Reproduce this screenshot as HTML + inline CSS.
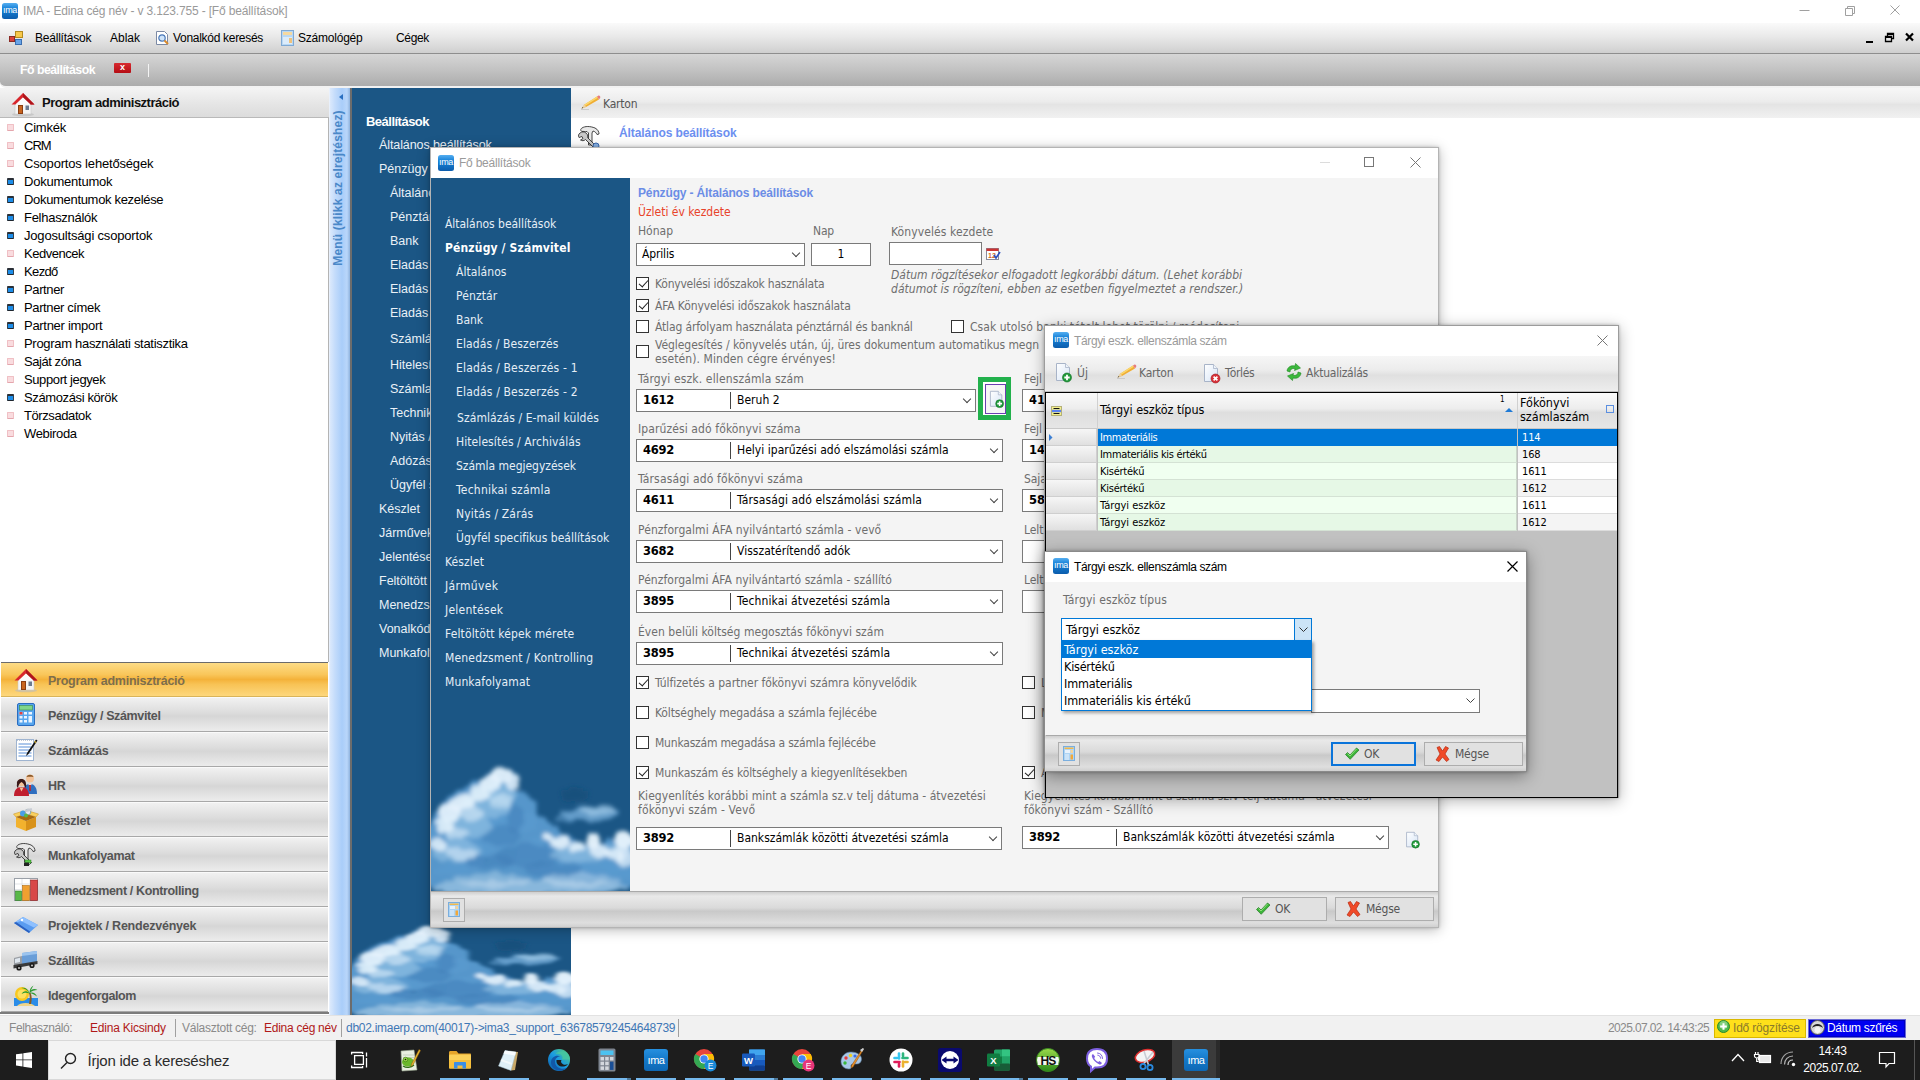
<!DOCTYPE html>
<html lang="hu"><head><meta charset="utf-8"><title>IMA</title>
<style>
*{box-sizing:border-box;margin:0;padding:0}
html,body{width:1920px;height:1080px;overflow:hidden;background:#fff}
body{position:relative;font-family:"DejaVu Sans Condensed","DejaVu Sans","Liberation Sans",sans-serif;font-size:12px;color:#000}
.a{position:absolute;white-space:nowrap}
.seg{font-family:"Liberation Sans",sans-serif}
.ar{font-family:"Liberation Sans",sans-serif}
.th{font-family:"DejaVu Sans Condensed","DejaVu Sans","Liberation Sans",sans-serif}
svg{position:absolute;overflow:visible}
/* top */
#titlebar{left:0;top:0;width:1920px;height:23px;background:#fff}
#menubar{left:0;top:23px;width:1920px;height:31px;background:linear-gradient(#fafafa 0%,#e9e9e9 45%,#cfcfcf 100%);border-bottom:1px solid #8e8e8e}
#tabbar{left:0;top:54px;width:1920px;height:33px;background:linear-gradient(#d6d6d6 0%,#c2c2c2 50%,#acacac 100%);border-bottom:1px solid #f0f0f0}
/* left */
#lefthead{left:0;top:87px;width:329px;height:31px;background:linear-gradient(#f4f4f4,#e4e4e4 60%,#dcdcdc);border-bottom:1px solid #b9b9b9}
#leftlist{left:0;top:118px;width:329px;height:544px;background:#fff;border-right:1px solid #9a9a9a}
.li{left:24px;font-family:"Liberation Sans",sans-serif;font-size:13px;letter-spacing:.1px;color:#000}
.bu{left:7px;width:8px;height:8px;border-radius:1.5px}
.bu.p{background:#f3c4c9;border:1px solid #e9a5ad;box-shadow:inset 0 0 0 1px #fbe6e8}
.bu.b{background:#2f7fc4;border:1px solid #1c4f82;box-shadow:inset 0 2px 0 #16324f}
.nav{left:1px;width:327px;height:35px;background:linear-gradient(#f1f1f1 0%,#dcdcdc 45%,#d6d6d6 55%,#ececec 100%);border-top:1px solid #fafafa;border-bottom:1px solid #a8a8a8}
.nav span{position:absolute;left:47px;top:10px;font-family:"Liberation Sans",sans-serif;font-weight:bold;font-size:12.5px;color:#555}

.li{font-size:12.5px;letter-spacing:-.05px}
#titlebar .tt{left:23px;top:4px;font-family:"Liberation Sans",sans-serif;font-size:12px;color:#9a9a9a;letter-spacing:-.15px}
.ima{width:16px;height:16px;border-radius:2.5px;background:linear-gradient(#2b9be8,#1173c7 55%,#0b5ea9);overflow:hidden}
.ima b{position:absolute;left:0;top:1px;width:16px;text-align:center;font:bold 8px/10px "Liberation Sans",sans-serif;color:#fff;letter-spacing:-.6px}
.mi{top:7px;font-family:"Liberation Sans",sans-serif;font-size:12.3px;color:#000;letter-spacing:-.1px}
#tabbar{border-bottom-left-radius:6px}
#tabbar .tn{left:20px;top:8px;font:bold 12.3px "Liberation Sans",sans-serif;color:#fff;letter-spacing:-.1px}
#tabbar .tx{left:114px;top:9px;width:17px;height:10px;background:linear-gradient(#d82a30,#b50d14);border-radius:1px;color:#fff;font:bold 9px/9px "Liberation Sans",sans-serif;text-align:center}
#tabbar .sp{left:148px;top:10px;width:1px;height:13px;background:#f4f4f4}
#lefthead span{position:absolute;left:42px;top:8px;font:bold 13px "Liberation Sans",sans-serif;color:#111;letter-spacing:-.15px}
#collapse{left:329px;top:87px;width:21px;height:928px;background:linear-gradient(90deg,#dbe9fc 0%,#c4dcfb 25%,#a9cdf9 60%,#b9d6fa 85%,#8fb3de 100%);border-left:1px solid #e8f0fc}
#collapse .vt{left:-70px;top:94px;width:160px;height:16px;transform:rotate(-90deg);font:bold 11.5px/16px "Liberation Sans",sans-serif;color:#4b88cb;text-align:center;letter-spacing:.1px}
#collapse .tri{left:8px;top:6px;width:0;height:0;border:4px solid transparent;border-right:5px solid #2a6fc0;border-left:0}
#bluepanel{left:350px;top:87px;width:221px;height:928px;background:#1b5685;border-left:1px solid #555;overflow:hidden}
#bluepanel div{position:absolute;white-space:nowrap;font-family:"Liberation Sans",sans-serif;font-size:12.5px;color:#eaf1f7}
#maintool{left:571px;top:87px;width:1349px;height:31px;background:linear-gradient(#f7f7f7 0%,#ececec 45%,#e4e4e4 55%,#f1f1f1 100%)}
#maintool span{position:absolute;left:32px;top:9px;font-size:12px;color:#555}
#mainttl{left:619px;top:125px;font:bold 12px "Liberation Sans",sans-serif;color:#6c8ff0}
.sel.nav{background:linear-gradient(#fddc86 0%,#f9c65a 35%,#f4b23a 50%,#f8c356 65%,#fdd77c 100%);border-top:1px solid #6b6b6b;border-bottom:1px solid #d9b45a}
.sel.nav span{color:#7d6e4c}
#navwrap{left:0;top:1012px;width:329px;height:3px;background:#e8e8e8;border-bottom:1px solid #8a8a8a}

.dlg{background:#f4f4f4;border:1px solid #b4b4b4;box-shadow:0 2px 12px rgba(0,0,0,.28),0 0 3px rgba(0,0,0,.2)}
.dt{left:0;top:0;right:0;height:30px;background:#fff}
.dt .ttl{left:28px;top:7px;font-family:"Liberation Sans",sans-serif;font-size:12px;color:#9a9a9a;letter-spacing:-.1px}
.bar{background:linear-gradient(#cfcfcf 0%,#e9e9e9 12%,#dadada 45%,#c9c9c9 55%,#dedede 88%,#d0d0d0 100%);border-top:1px solid #a9a9a9}
.btn{height:24px;border:1px solid #adadad;background:#e1e1e1;font-size:12px;color:#555}
.btn span{position:absolute;top:4px}
.lb{font-size:12px;color:#6e6e6e;letter-spacing:-.05px}
.cb{width:13px;height:13px;border:1px solid #333;background:#fff}
.cb.on:after{content:"";position:absolute;left:3.5px;top:0.5px;width:3.5px;height:7px;border:solid #222;border-width:0 1.4px 1.4px 0;transform:rotate(40deg)}
.cmb{height:24px;border:1px solid #7a7a7a;background:#fff;font-size:12px;color:#000}
.cmb b{position:absolute;left:6px;top:4px;font-family:"DejaVu Sans","Liberation Sans",sans-serif;font-size:11.5px;font-weight:bold;letter-spacing:.1px}
.cmb i{position:absolute;left:93px;top:3px;width:1px;height:17px;background:#444}
.cmb span{position:absolute;left:100px;top:4px}
.cmb:after{content:"";position:absolute;right:5px;top:7px;width:5px;height:5px;border:solid #444;border-width:0 1px 1px 0;transform:rotate(45deg)}
.cmb.na:after{display:none}
#d1menu{left:0;top:30px;width:199px;height:713px;background:#1b5685;overflow:hidden}
#d1menu div{position:absolute;white-space:nowrap;font-size:12px;color:#e6eef6}

#dlg2{left:1045px;top:325px;width:573px;height:472px;background:#c1c1c1;border:1px solid #9c9c9c;box-shadow:0 3px 14px rgba(0,0,0,.3),0 0 3px rgba(0,0,0,.25)}
#d2tool{left:0;top:30px;width:571px;height:35px;background:linear-gradient(#f6f6f6 0%,#ececec 40%,#e0e0e0 55%,#ededed 100%)}
#d2tool span{position:absolute;top:10px;font-size:12px;color:#666}
#grid{left:0;top:65px;width:571px;height:405px;border:1px solid #000;border-top:2px solid #000;background:#c1c1c1}
#ghead{left:0;top:0;width:569px;height:36px;background:linear-gradient(#fafafa 0%,#ededed 45%,#dedede 55%,#e6e6e6 100%);border-bottom:1px solid #c8c8c8}
.gh{font-size:12.5px;color:#000}
.gr{left:0;width:569px;height:17px;font-size:11.5px;letter-spacing:-.3px}
.gr u{position:absolute;left:0;top:0;width:50px;height:17px;background:linear-gradient(#f6f6f6,#e0e0e0);border-right:1px solid #cfcfcf;border-bottom:1px solid #cfcfcf}
.gr s{position:absolute;left:51px;top:0;width:420px;height:17px;background:#f0fff0;border-right:1px solid #c9d6c9;border-bottom:1px solid #d4e2d4;text-decoration:none;padding:2px 0 0 2px}
.gr em{position:absolute;left:472px;top:0;width:97px;height:17px;background:#fff;font-style:normal;border-bottom:1px solid #dcdcdc;padding:2px 0 0 3px}
.gr.alt s{background:#e6f8e6}
.gr.alt em{background:#f4f4f4}
.gr.sel s,.gr.sel em{background:#0078d7;color:#fff;border-color:#0078d7}
#dlg3{left:1045px;top:551px;width:483px;height:221px;background:#f4f4f4;border:1px solid #8a8a8a;box-shadow:0 4px 16px rgba(0,0,0,.4),0 0 3px rgba(0,0,0,.3)}
#dlg3 .ttl{color:#000}
#dd{left:15px;top:88px;width:251px;height:72px;background:#fff;border:1px solid #0078d7;box-shadow:2px 2px 3px rgba(0,0,0,.35);font-size:12.5px}
#dd div{position:absolute;left:0;width:249px;height:17px;padding:0 0 0 2px;line-height:16px;white-space:nowrap}
#status{left:0;top:1015px;width:1920px;height:25px;background:#f1f1f1;border-top:1px solid #e2e2e2;font-family:"Liberation Sans",sans-serif;font-size:12px}
#status div{position:absolute;top:5px;white-space:nowrap;letter-spacing:-.1px}
#status i{position:absolute;top:3px;width:1px;height:18px;background:#a0a0a0}
#task{left:0;top:1040px;width:1920px;height:40px;background:#1d1d1d}
#search{left:48px;top:0;width:288px;height:40px;background:#f3f3f3;border:1px solid #d8d8d8}
#search span{position:absolute;left:40px;top:11px;font-family:"Liberation Sans",sans-serif;font-size:15px;color:#2b2b2b;letter-spacing:-.1px}
.tk{position:absolute;top:0;width:48px;height:40px}
.tk.run:after{content:"";position:absolute;left:4px;right:4px;bottom:0;height:2px;background:#76b9ed}
.tk.act{background:#3b3b3b}
.tk.act:after{left:0;right:0}
.tki{position:absolute;left:12px;top:8px;width:24px;height:24px}
.nic{left:12px;top:4px}.hic{left:10px;top:3px}

/* fixes round 1 */
.lb,.li,#bluepanel div,#d1menu div,.dt .ttl,#mainttl{margin-top:1px}
#titlebar .tt{margin-top:0}
.nav span{top:11px;font-size:12.5px;letter-spacing:-.3px}
.mi{top:8px;font-size:12px;letter-spacing:-.2px}
#tabbar{height:34px;border-bottom:2px solid #f2f2f2}
#tabbar .tn{top:9px;letter-spacing:-.4px}
#lefthead{top:88px;height:30px}
#lefthead span{top:8px}
#collapse,#bluepanel{top:88px;height:927px}
#bluepanel div{margin-top:0}
#maintool{top:88px;height:30px}
#maintool span{top:9px}
#collapse .vt{font-size:12px;letter-spacing:.3px;color:#4a88c8;top:92px}
.cmb span,.cmb b{margin-top:0}
.btn span{margin-top:0}
.dt .ttl{letter-spacing:-.25px}
.gr{font-size:11px;letter-spacing:-.15px}
.gr s,.gr em{padding-top:1px}

/* fixes round 2 */
.ima{background:linear-gradient(#55aef0 0%,#2088dc 30%,#1478cc 55%,#0c5cac 100%)}
.ima b{left:-1px;top:0;width:18px;font:normal 11px/16px "Liberation Sans",sans-serif;letter-spacing:-.8px}
#lefthead span{top:7px}
.tk{margin-left:1px}
#dlg2{height:473px}
#grid{height:406px}

/* fixes round 3 */
.ima b{left:-1px;top:0;width:18px;font:normal 10px/15px "Liberation Sans",sans-serif;letter-spacing:-.6px}
#dlg3 .lb{margin-top:0}
#dd{height:71px}
#dd div{line-height:18px}

.gr s,.gr em{padding-top:2px}
.cb.on:after{left:3.5px;top:0;width:4px;height:8px;border-width:0 1.3px 1.3px 0;transform:rotate(42deg)}

/* 1px dialog shift */
#dlg2{left:1044px;width:575px}
#dlg3{left:1044px;width:484px}
.wr{left:1px;top:0;height:100%}
#dlg2 .wr{width:571px}
#dlg3 .wr{width:481px}
.wr .dt{left:-1px;right:-1px;border-left:1px solid transparent}
#d2tool{left:-1px;width:573px;border-left:1px solid transparent}
#grid{left:-1px;width:573px}
.gw{left:1px;top:0;width:569px;height:100%}
#ghead{left:-1px;width:571px;border-left:1px solid transparent}
.gr u{left:-1px;width:51px}
#dlg3 .bar{left:-1px!important;width:482px!important;border-left:1px solid transparent}
.ima b{font:normal 9px/15px "Liberation Sans",sans-serif;letter-spacing:-.35px;left:-1px;width:18px}

#dlg3{width:483px}
#dlg3 .wr{width:480px}
#dlg3 .bar{width:481px!important}
#ghead .gh{margin-top:-1px}

.bu{left:7px;width:7px;height:7px;border-radius:1px}
.bu.p{background:#fae1e3;border:1px solid #f2c6ca;border-bottom-color:#e7adb3;box-shadow:none}
.bu.b{background:#1c8de9;border:1px solid #33424f;border-top:2px solid #2a2f36;border-bottom-color:#20262e;box-shadow:none}

.li{font-size:13px;margin-top:1px}
.bu.p{background:#f9dcdf;border-color:#f0c0c5;border-bottom-color:#e4a6ad}
#bluepanel div{margin-top:1px}

#navwrap{top:1012px;height:2px;background:#7c7c7c;border:none;left:0;width:329px}
#search span{left:38.5px}
#dlg3 .dt{right:0}

#dlg1 .cmb b,#dlg1 .cmb span{top:3px}
#dlg1 .cmb i{top:2px}
#dlg1 .cmb:after{top:6px}
body{font-stretch:condensed}
.cmb b{font-stretch:normal}

#collapse .vt{left:-72px;letter-spacing:.18px}
#collapse .tri{left:9px;top:6px;border:3.5px solid transparent;border-right:4.5px solid #2a6fc0;border-left:0}
#leftlist{border-right-color:#b4b4b4}
#bluepanel{border-left:2px solid #6c6c6c}
#bluepanel div{margin-left:-1px}

#grid{top:66px;border-top:1px solid #000;height:406px}
.gr s{width:419px}
.gr em{left:471px;width:99px;padding-left:4px}
</style></head><body>
<div class="a" id="titlebar"><div class="a ima" style="left:2px;top:3px"><b>ıma</b></div><div class="a tt" style="letter-spacing:-0.16px/*f*/;letter-spacing:-0.16px/*f*/">IMA - Edina cég név - v 3.123.755 - [Fő beállítások]</div>
<svg style="left:1790px;top:0" width="130" height="23" viewBox="0 0 130 23" fill="none" stroke="#a0a0a0" stroke-width="1"><path d="M9.5 10.5h10"/><path d="M55.5 8.5h7v7h-7zM57.5 8.5v-2h7v7h-2"/><path d="M100.500 5.500l9 9M109.500 5.500l-9 9"/></svg></div>
<div class="a" id="menubar">
<svg style="left:9px;top:8px" width="14" height="14" viewBox="0 0 14 14"><rect x="0.500" y="5.500" width="5" height="5" fill="#d9413a" stroke="#8a2a24"/><rect x="6.500" y="0.500" width="7" height="6" fill="#f7c84a" stroke="#b48a1e"/><rect x="6.500" y="8.500" width="6" height="5" fill="#6aa5e8" stroke="#3a6eb0"/></svg>
<div class="a mi" style="left:35px;letter-spacing:-0.223px/*f*/">Beállítások</div><div class="a mi" style="left:110px;letter-spacing:-0.006px/*f*/">Ablak</div>
<svg style="left:155px;top:7px" width="15" height="16" viewBox="0 0 15 16"><path d="M1.500 1.500h8l3 3v10h-11z" fill="#fff" stroke="#7c8aa5"/><circle cx="7" cy="8" r="3.200" fill="#cfe4fa" stroke="#4a78b8" stroke-width="1.200"/><path d="M9.500 10.500l3.500 3.500" stroke="#d98a2b" stroke-width="2"/></svg>
<div class="a mi" style="left:173px;letter-spacing:-0.296px/*f*/">Vonalkód keresés</div>
<svg style="left:281px;top:7px" width="13" height="16" viewBox="0 0 13 16"><rect x="0.500" y="0.500" width="12" height="15" fill="#b9d8f4" stroke="#7fa9d4"/><rect x="2" y="2" width="9" height="3" fill="#f6d9a0"/><rect x="2" y="7" width="9" height="7" fill="#dcecfb"/><rect x="8" y="8" width="3" height="5" fill="#f0c27a"/></svg>
<div class="a mi" style="left:298px;letter-spacing:-0.222px/*f*/">Számológép</div><div class="a mi" style="left:396px;letter-spacing:-0.341px/*f*/">Cégek</div>
<svg style="left:1860px;top:5px" width="60" height="20" viewBox="0 0 60 20" fill="none" stroke="#000"><path d="M6 14h7" stroke-width="2"/><path d="M25.500 8.500h6v5h-6zM27.500 8v-2.500h6v5h-2" stroke-width="1.300"/><path d="M25 9h7M27 6h7" stroke-width="1.800"/><path d="M46 5.500l7 7M53 5.500l-7 7" stroke-width="2.200"/></svg>
</div>
<div class="a" id="tabbar"><div class="a tn" style="letter-spacing:-0.5px/*f*/;letter-spacing:-0.501px/*f*/">Fő beállítások</div><div class="a tx">x</div><div class="a sp"></div></div>
<div class="a" id="lefthead"><!--nh--><svg class="hic" width="26" height="26" viewBox="0 0 26 26"><ellipse cx="13" cy="23.500" rx="11" ry="1.800" fill="#bbb" opacity=".6"/><rect x="5" y="12" width="16" height="11" fill="#f4f4f4" stroke="#c8c8c8" stroke-width=".6"/><path d="M13 2L1.500 13.500h4L13 6.500l7.500 7h4z" fill="#d8262c"/><path d="M13 2l11.500 11.500h-4L13 6.500z" fill="#b0151b"/><path d="M13 6.500L5.500 13.500h15z" fill="#fafafa"/><rect x="8" y="14" width="5" height="9" fill="#8a3d12"/><rect x="9" y="15" width="3" height="7" fill="#c8641e"/><rect x="15.500" y="14.500" width="3.500" height="4.500" fill="#6b7a90"/></svg><!--/nh--><span style="letter-spacing:-0.505px/*f*/;letter-spacing:-0.505px/*f*/">Program adminisztráció</span></div>
<div class="a" id="leftlist"></div>
<!--LEFT-->
<div class="a bu p" style="top:124px"></div><div class="a li" style="top:119px;letter-spacing:-0.224px/*f*/">Cimkék</div>
<div class="a bu p" style="top:142px"></div><div class="a li" style="top:137px;letter-spacing:-0.973px/*f*/">CRM</div>
<div class="a bu p" style="top:160px"></div><div class="a li" style="top:155px;letter-spacing:-0.175px/*f*/">Csoportos lehetőségek</div>
<div class="a bu b" style="top:178px"></div><div class="a li" style="top:173px;letter-spacing:-0.229px/*f*/">Dokumentumok</div>
<div class="a bu b" style="top:196px"></div><div class="a li" style="top:191px;letter-spacing:-0.318px/*f*/">Dokumentumok kezelése</div>
<div class="a bu b" style="top:214px"></div><div class="a li" style="top:209px;letter-spacing:-0.275px/*f*/">Felhasználók</div>
<div class="a bu b" style="top:232px"></div><div class="a li" style="top:227px;letter-spacing:-0.18px/*f*/">Jogosultsági csoportok</div>
<div class="a bu p" style="top:250px"></div><div class="a li" style="top:245px;letter-spacing:-0.481px/*f*/">Kedvencek</div>
<div class="a bu b" style="top:268px"></div><div class="a li" style="top:263px;letter-spacing:-0.635px/*f*/">Kezdő</div>
<div class="a bu b" style="top:286px"></div><div class="a li" style="top:281px;letter-spacing:-0.376px/*f*/">Partner</div>
<div class="a bu b" style="top:304px"></div><div class="a li" style="top:299px;letter-spacing:-0.378px/*f*/">Partner címek</div>
<div class="a bu b" style="top:322px"></div><div class="a li" style="top:317px;letter-spacing:-0.291px/*f*/">Partner import</div>
<div class="a bu p" style="top:340px"></div><div class="a li" style="top:335px;letter-spacing:-0.3px/*f*/">Program használati statisztika</div>
<div class="a bu p" style="top:358px"></div><div class="a li" style="top:353px;letter-spacing:-0.444px/*f*/">Saját zóna</div>
<div class="a bu p" style="top:376px"></div><div class="a li" style="top:371px;letter-spacing:-0.388px/*f*/">Support jegyek</div>
<div class="a bu b" style="top:394px"></div><div class="a li" style="top:389px;letter-spacing:-0.379px/*f*/">Számozási körök</div>
<div class="a bu p" style="top:412px"></div><div class="a li" style="top:407px;letter-spacing:-0.412px/*f*/">Törzsadatok</div>
<div class="a bu p" style="top:430px"></div><div class="a li" style="top:425px;letter-spacing:-0.339px/*f*/">Webiroda</div>
<!--NAV-->
<div class="a nav sel" style="top:662px"><!--n0--><svg class="nic" width="26" height="26" viewBox="0 0 26 26"><ellipse cx="13" cy="23.500" rx="11" ry="1.800" fill="#bbb" opacity=".6"/><rect x="5" y="12" width="16" height="11" fill="#f4f4f4" stroke="#c8c8c8" stroke-width=".6"/><path d="M13 2L1.500 13.500h4L13 6.500l7.500 7h4z" fill="#d8262c"/><path d="M13 2l11.500 11.500h-4L13 6.500z" fill="#b0151b"/><path d="M13 6.500L5.500 13.500h15z" fill="#fafafa"/><rect x="8" y="14" width="5" height="9" fill="#8a3d12"/><rect x="9" y="15" width="3" height="7" fill="#c8641e"/><rect x="15.500" y="14.500" width="3.500" height="4.500" fill="#6b7a90"/></svg><!--/n0--><span style="letter-spacing:-0.26px/*f*/;letter-spacing:-0.259px/*f*/">Program adminisztráció</span></div>
<div class="a nav" style="top:697px"><!--n1--><svg class="nic" width="26" height="26" viewBox="0 0 26 26"><rect x="4.500" y="1.500" width="17" height="22" rx="1.500" fill="#58a6ee" stroke="#2a6cc0"/><rect x="6.500" y="3.500" width="13" height="4.500" fill="#7fd68a" stroke="#3a8a4a" stroke-width=".6"/><g fill="#eaf4ff"><rect x="6.500" y="10" width="3" height="2.500"/><rect x="11" y="10" width="3" height="2.500"/><rect x="15.500" y="10" width="3.500" height="2.500"/><rect x="6.500" y="14" width="3" height="2.500"/><rect x="11" y="14" width="3" height="2.500"/><rect x="6.500" y="18" width="3" height="2.500"/><rect x="11" y="18" width="3" height="2.500"/><rect x="15.500" y="14" width="3.500" height="6.500"/></g><rect x="6.500" y="10" width="3" height="2.500" fill="#e04040"/></svg><!--/n1--><span style="letter-spacing:-0.368px/*f*/;letter-spacing:-0.368px/*f*/">Pénzügy / Számvitel</span></div>
<div class="a nav" style="top:732px"><!--n2--><svg class="nic" width="26" height="26" viewBox="0 0 26 26"><rect x="3.500" y="2.500" width="17" height="21" fill="#fff" stroke="#9fb4d0"/><path d="M5.500 7h13M5.500 10h13M5.500 13h13M5.500 16h13M5.500 19h13" stroke="#5a8fd8" stroke-width="1.200"/><path d="M4 3.500h16" stroke="#c0c8d4" stroke-dasharray="1 1"/><path d="M23 2.500L14 16l-1 3 2.500-2L24.500 3.500z" fill="#111"/><path d="M21.500 4.500l1.500 1" stroke="#e8c030" stroke-width="1.500"/></svg><!--/n2--><span style="letter-spacing:-0.327px/*f*/;letter-spacing:-0.327px/*f*/">Számlázás</span></div>
<div class="a nav" style="top:767px"><!--n3--><svg class="nic" width="26" height="26" viewBox="0 0 26 26"><circle cx="17" cy="6.500" r="4" fill="#f2c39a"/><path d="M13.500 5c1-3 6-3 7 0-2-.5-5-.5-7 0z" fill="#8a5a2a"/><path d="M10 22c0-7 3-10 7-10s7 3 7 10z" fill="#2f6fc0"/><path d="M15.500 12l1.500 5 1.500-5z" fill="#fff"/><path d="M16.600 13l.4 6 .4-6z" fill="#c02020" stroke="#c02020"/><circle cx="8.500" cy="10.500" r="3.800" fill="#f2c39a"/><path d="M4 12c-1-6 9-7 9 0 .5 2 0 3-1 4-.5-3-1.500-5-3.500-6-2 1-3 3-3.500 6-1-1-1.500-2-1-4z" fill="#3a1a1a"/><path d="M1 24c0-6 3-9 7.500-9S16 18 16 24z" fill="#c01e2e"/><path d="M6.500 15.500l2 4 2-4z" fill="#f2c39a"/></svg><!--/n3--><span style="letter-spacing:-0.384px/*f*/;letter-spacing:-0.382px/*f*/">HR</span></div>
<div class="a nav" style="top:802px"><!--n4--><svg class="nic" width="26" height="26" viewBox="0 0 26 26"><path d="M3 10l10 4v10L3 20z" fill="#f2b22e"/><path d="M23 10l-10 4v10l10-4z" fill="#d8921a"/><path d="M3 10l-2.500-3 10-3L13 7zM23 10l2.500-3-10-3L13 7z" fill="#f8d060" stroke="#c8901a" stroke-width=".5"/><path d="M3 10l10-3 10 3-10 4z" fill="#a86a10"/><circle cx="10" cy="6.500" r="3" fill="#4a9ee8"/><circle cx="15" cy="5" r="2.800" fill="#e8e8f0" stroke="#8aa"/><rect x="12" y="2" width="7" height="2.500" fill="#c8ccd4" transform="rotate(-15 15 3)"/><circle cx="13" cy="8.500" r="2" fill="#58b848"/></svg><!--/n4--><span style="letter-spacing:-0.21px/*f*/;letter-spacing:-0.212px/*f*/">Készlet</span></div>
<div class="a nav" style="top:837px"><!--n5--><svg class="nic" width="26" height="26" viewBox="0 0 26 26"><path d="M5 3c3-2 8-2 13 0 3 1.500 4 4 4 6l-2 .5c-1-2-2-3-4-3.500L15 8v12h-3.500V8l-1.500-1.500C7.500 7 6.500 6 5 6.500 3 5.500 3.500 4 5 3z" fill="#e8e8e8" stroke="#333" stroke-width=".9"/><path d="M3 8c-1.500 1-2 3-1 4.500l3-1 1 2-2.500 1.500c1.500 1 3.500 1 5-.5l8 8 2-2-8-8c.5-2 0-3.500-1.500-4.500-2-1.500-4-1.500-6 0z" fill="#c8c8c8" stroke="#222" stroke-width=".8"/><rect x="12" y="18" width="6" height="3" fill="#58c848" stroke="#2a7a20" stroke-width=".5"/><rect x="11" y="20.500" width="5" height="3.500" fill="#222"/></svg><!--/n5--><span style="letter-spacing:-0.33px/*f*/;letter-spacing:-0.33px/*f*/">Munkafolyamat</span></div>
<div class="a nav" style="top:872px"><!--n6--><svg class="nic" width="26" height="26" viewBox="0 0 26 26"><rect x="1.500" y="1.500" width="23" height="22" fill="#fff" stroke="#9aa0a8"/><path d="M2 7h22M2 12.500h22M2 18h22M9 2v21M17 2v21" stroke="#d4d8dc" stroke-width=".7"/><rect x="2.500" y="14" width="6" height="9.500" fill="#58b848" stroke="#2a7a20" stroke-width=".6"/><rect x="9.500" y="8.500" width="7" height="15" fill="#f0a030" stroke="#b06a10" stroke-width=".6"/><rect x="17.500" y="3" width="7" height="20.500" fill="#d84848" stroke="#902020" stroke-width=".6"/></svg><!--/n6--><span style="letter-spacing:-0.361px/*f*/;letter-spacing:-0.361px/*f*/">Menedzsment / Kontrolling</span></div>
<div class="a nav" style="top:907px"><!--n7--><svg class="nic" width="26" height="26" viewBox="0 0 26 26"><path d="M1 11l9-6 15 8-9 8z" fill="#5a9cf0"/><path d="M1 11l9-6 15 8-4 2.500L8 9z" fill="#8ec0ff"/><path d="M1 11l15 10 1-1.500L3 10z" fill="#2a60c0"/><circle cx="9" cy="8" r="1.200" fill="#fff"/></svg><!--/n7--><span style="letter-spacing:-0.219px/*f*/;letter-spacing:-0.219px/*f*/">Projektek / Rendezvények</span></div>
<div class="a nav" style="top:942px"><!--n8--><svg class="nic" width="26" height="26" viewBox="0 0 26 26"><path d="M9 6l15-2v12l-15 3z" fill="#6a9ed8"/><path d="M9 6l15-2v3L9 9z" fill="#9cc4ee"/><path d="M1 11l8-2v10l-8 1.500z" fill="#9a9ea4"/><path d="M2 12l5-1.200V15L2 16z" fill="#dfe7ef"/><path d="M0.500 18l24-4v3l-24 4.500z" fill="#3a3a3a"/><circle cx="6" cy="21" r="2.600" fill="#1a1a1a"/><circle cx="6" cy="21" r="1.100" fill="#bbb"/><circle cx="19" cy="18.500" r="2.600" fill="#1a1a1a"/><circle cx="19" cy="18.500" r="1.100" fill="#bbb"/></svg><!--/n8--><span style="letter-spacing:-0.414px/*f*/;letter-spacing:-0.415px/*f*/">Szállítás</span></div>
<div class="a nav" style="top:977px"><!--n9--><svg class="nic" width="26" height="26" viewBox="0 0 26 26"><rect x="1" y="16" width="24" height="8" fill="#2a8ce8"/><circle cx="9" cy="12" r="7" fill="#f8c820"/><circle cx="9" cy="12" r="4.500" fill="#fce060"/><path d="M4 24c3-4 14-4 18 0z" fill="#f0d488"/><path d="M16 22c1-5 1-8 0-11l1.500-.5c1.500 3.500 1.500 7 .5 11.500z" fill="#8a5a20"/><path d="M16.500 11C13 8 10 9 8.500 12c3-1.500 5-1.500 8-.5zM16.500 11c-1-4-5-6-8-5 3 .5 6 2 8 5zM16.500 11c1-4 5-5 8-3-3 0-6 1-8 3zM16.500 11c3-1.500 6 0 7.500 3.500-2.500-2-4.500-3-7.500-3.500zM16.500 11c0-3 1-6 4-7.500-1.500 2-2.500 5-4 7.500z" fill="#2a9a30"/></svg><!--/n9--><span style="letter-spacing:-0.412px/*f*/;letter-spacing:-0.412px/*f*/">Idegenforgalom</span></div>
<!--/NAV-->
<div class="a" id="collapse"><div class="a tri"></div><div class="a vt">Menü (klikk az elrejtéshez)</div></div>
<div class="a" id="bluepanel"><div style="left:15px;top:25px;font-weight:bold;font-size:13px;color:#fff;letter-spacing:-0.514px/*f*/">Beállítások</div><div style="left:28px;top:49px;letter-spacing:-0.091px/*f*/">Általános beállítások</div><div style="left:28px;top:73px">Pénzügy / Számvitel</div><div style="left:39px;top:97px">Általános</div><div style="left:39px;top:121px">Pénztár</div><div style="left:39px;top:145px">Bank</div><div style="left:39px;top:169px">Eladás / Beszerzés</div><div style="left:39px;top:193px">Eladás / Beszerzés - 1</div><div style="left:39px;top:217px">Eladás / Beszerzés - 2</div><div style="left:39px;top:243px">Számlázás / E-mail küldés</div><div style="left:39px;top:269px">Hitelesítés / Archiválás</div><div style="left:39px;top:293px">Számla megjegyzések</div><div style="left:39px;top:317px">Technikai számla</div><div style="left:39px;top:341px">Nyitás / Zárás</div><div style="left:39px;top:365px">Adózás</div><div style="left:39px;top:389px">Ügyfél specifikus beállítások</div><div style="left:28px;top:413px">Készlet</div><div style="left:28px;top:437px">Járművek</div><div style="left:28px;top:461px">Jelentések</div><div style="left:28px;top:485px">Feltöltött képek mérete</div><div style="left:28px;top:509px">Menedzsment / Kontrolling</div><div style="left:28px;top:533px">Vonalkód</div><div style="left:28px;top:557px">Munkafolyamat</div><!--CLOUD1--><svg style="left:0;top:837px;width:220px;height:90px" viewBox="0 0 200 130" preserveAspectRatio="none"><defs><filter id="cf1" x="-10%" y="-10%" width="120%" height="120%"><feTurbulence type="fractalNoise" baseFrequency=".07" numOctaves="4" seed="4" result="n"/><feDisplacementMap in="SourceGraphic" in2="n" scale="10" xChannelSelector="R" yChannelSelector="G" result="d"/><feGaussianBlur in="d" stdDeviation="2.200"/></filter></defs><g filter="url(#cf1)"><ellipse cx="70" cy="18" rx="17" ry="14" fill="#5a9acf" opacity="0.95"/><ellipse cx="58" cy="30" rx="26" ry="18" fill="#5a9acf" opacity="0.95"/><ellipse cx="45" cy="45" rx="36" ry="22" fill="#5a9acf" opacity="0.95"/><ellipse cx="72" cy="50" rx="36" ry="28" fill="#5a9acf" opacity="0.95"/><ellipse cx="40" cy="70" rx="44" ry="26" fill="#5a9acf" opacity="0.95"/><ellipse cx="88" cy="75" rx="42" ry="28" fill="#5a9acf" opacity="0.95"/><ellipse cx="20" cy="90" rx="34" ry="24" fill="#5a9acf" opacity="0.95"/><ellipse cx="122" cy="92" rx="36" ry="20" fill="#5a9acf" opacity="0.95"/><ellipse cx="160" cy="98" rx="38" ry="18" fill="#5a9acf" opacity="0.95"/><ellipse cx="192" cy="95" rx="22" ry="22" fill="#5a9acf" opacity="0.95"/><ellipse cx="100" cy="116" rx="112" ry="22" fill="#5a9acf" opacity="0.95"/><ellipse cx="28" cy="58" rx="28" ry="20" fill="#5a9acf" opacity="0.95"/><ellipse cx="98" cy="94" rx="32" ry="12" fill="#3d7cb6" opacity="0.5"/><ellipse cx="72" cy="72" rx="20" ry="10" fill="#3d7cb6" opacity="0.5"/><ellipse cx="122" cy="108" rx="28" ry="8" fill="#3d7cb6" opacity="0.5"/><ellipse cx="60" cy="100" rx="24" ry="8" fill="#3d7cb6" opacity="0.5"/><ellipse cx="85" cy="55" rx="10" ry="14" fill="#3d7cb6" opacity="0.5"/><ellipse cx="55" cy="40" rx="24" ry="14" fill="#a4cdec" opacity="0.5"/><ellipse cx="35" cy="62" rx="26" ry="14" fill="#a4cdec" opacity="0.5"/><ellipse cx="25" cy="88" rx="24" ry="12" fill="#a4cdec" opacity="0.5"/><ellipse cx="70" cy="28" rx="16" ry="12" fill="#a4cdec" opacity="0.5"/><ellipse cx="150" cy="92" rx="30" ry="8" fill="#a4cdec" opacity="0.5"/><ellipse cx="185" cy="90" rx="14" ry="10" fill="#a4cdec" opacity="0.5"/><ellipse cx="70" cy="10" rx="11" ry="8" fill="#e8f4fd" opacity="0.9"/><ellipse cx="60" cy="18" rx="10" ry="8" fill="#e8f4fd" opacity="0.9"/><ellipse cx="82" cy="17" rx="8" ry="7" fill="#e8f4fd" opacity="0.8"/><ellipse cx="48" cy="28" rx="10" ry="8" fill="#e8f4fd" opacity="0.85"/><ellipse cx="30" cy="38" rx="14" ry="9" fill="#e8f4fd" opacity="0.9"/><ellipse cx="18" cy="48" rx="12" ry="9" fill="#e8f4fd" opacity="0.9"/><ellipse cx="40" cy="50" rx="14" ry="8" fill="#e8f4fd" opacity="0.5"/><ellipse cx="12" cy="62" rx="10" ry="8" fill="#e8f4fd" opacity="0.85"/><ellipse cx="26" cy="70" rx="12" ry="7" fill="#e8f4fd" opacity="0.5"/><ellipse cx="8" cy="82" rx="9" ry="8" fill="#e8f4fd" opacity="0.8"/><ellipse cx="30" cy="92" rx="16" ry="7" fill="#e8f4fd" opacity="0.5"/><ellipse cx="118" cy="74" rx="7" ry="5" fill="#e8f4fd" opacity="0.9"/><ellipse cx="130" cy="80" rx="9" ry="6" fill="#e8f4fd" opacity="0.9"/><ellipse cx="147" cy="84" rx="8" ry="6" fill="#e8f4fd" opacity="0.85"/><ellipse cx="163" cy="77" rx="7" ry="9" fill="#e8f4fd" opacity="0.95"/><ellipse cx="170" cy="88" rx="10" ry="7" fill="#e8f4fd" opacity="0.8"/><ellipse cx="193" cy="77" rx="9" ry="10" fill="#e8f4fd" opacity="0.95"/><ellipse cx="184" cy="92" rx="10" ry="7" fill="#e8f4fd" opacity="0.8"/><ellipse cx="197" cy="95" rx="8" ry="10" fill="#e8f4fd" opacity="0.7"/><ellipse cx="60" cy="119" rx="40" ry="7" fill="#e8f4fd" opacity="0.3"/><ellipse cx="150" cy="119" rx="40" ry="7" fill="#e8f4fd" opacity="0.32"/><ellipse cx="100" cy="126" rx="100" ry="7" fill="#e8f4fd" opacity="0.35"/><ellipse cx="70" cy="36" rx="12" ry="8" fill="#e8f4fd" opacity="0.4"/><ellipse cx="160" cy="50" rx="30" ry="7" fill="#7fb6e2" opacity="0.7"/><ellipse cx="168" cy="46" rx="18" ry="5" fill="#a8d0ee" opacity="0.6"/><ellipse cx="140" cy="55" rx="16" ry="4" fill="#6ea8d8" opacity="0.5"/><ellipse cx="145" cy="30" rx="14" ry="8" fill="#164a75" opacity="0.55"/></g></svg><!--/CLOUD1--></div>
<div class="a" id="maintool"><svg style="left:10px;top:7px" width="20" height="15" viewBox="0 0 20 15"><path d="M0.500 13.500l3-4L16 1.500l2 3L5 12z" fill="#f0ae34"/><path d="M3.500 9.500L16 1.500l.9 1.300L4.300 10.800z" fill="#fbd76c"/><path d="M16 1.500l1.600-.9c.9-.4 2.200 1.400 1.600 2.200L18 4.500z" fill="#e77c7c"/><path d="M0.500 13.500l3-4L5 12z" fill="#ead2a4"/><path d="M0.500 13.500l1.200-1.600.6 1z" fill="#444"/><path d="M0 14.500h8" stroke="#c4c4c4" stroke-width=".8"/></svg><span style="letter-spacing:-0.202px/*f*/;letter-spacing:-0.2px/*f*/">Karton</span></div>
<svg style="left:577px;top:125px" width="26" height="26" viewBox="0 0 26 26"><path d="M5 3c3-2 8-2 13 0 3 1.500 4 4 4 6l-2 .5c-1-2-2-3-4-3.500L15 8v12h-3.500V8l-1.500-1.500C7.500 7 6.500 6 5 6.500 3 5.500 3.500 4 5 3z" fill="#e8e8e8" stroke="#333" stroke-width=".9"/><path d="M3 8c-1.500 1-2 3-1 4.500l3-1 1 2-2.500 1.500c1.500 1 3.500 1 5-.5l8 8 2-2-8-8c.5-2 0-3.500-1.500-4.500-2-1.500-4-1.500-6 0z" fill="#c8c8c8" stroke="#222" stroke-width=".8"/><circle cx="19" cy="21" r="3" fill="#8ab4e8" stroke="#3a6ab0"/></svg><div class="a" id="mainttl" style="letter-spacing:-0.089px/*f*/">Általános beállítások</div>
<div class="a" id="navwrap"></div>
<div class="a dlg" id="dlg1" style="left:430px;top:147px;width:1009px;height:781px"><div class="a dt"><div class="a ima" style="left:7px;top:7px"><b>ıma</b></div><div class="a ttl" style="letter-spacing:-0.23px/*f*/;letter-spacing:-0.23px/*f*/">Fő beállítások</div><svg style="left:880px;top:0" width="126" height="30" viewBox="0 0 126 30" fill="none"><path d="M9 14.500h10" stroke="#dcdcdc"/><rect x="53.500" y="9.500" width="9" height="9" stroke="#777"/><path d="M99.500 9.500l10 10M109.500 9.500l-10 10" stroke="#777"/></svg></div>
<div class="a" id="d1menu"><div style="left:14px;top:38px;letter-spacing:-0.026px/*f*/">Általános beállítások</div><div style="left:14px;top:62px;font-weight:bold;font-size:12px;color:#fff;letter-spacing:.1px;letter-spacing:0.151px/*f*/">Pénzügy / Számvitel</div><div style="left:25px;top:86px;letter-spacing:0.064px/*f*/">Általános</div><div style="left:25px;top:110px;letter-spacing:0.103px/*f*/">Pénztár</div><div style="left:25px;top:134px;letter-spacing:-0.031px/*f*/">Bank</div><div style="left:25px;top:158px;letter-spacing:0.117px/*f*/">Eladás / Beszerzés</div><div style="left:25px;top:182px;letter-spacing:0.167px/*f*/">Eladás / Beszerzés - 1</div><div style="left:25px;top:206px;letter-spacing:0.167px/*f*/">Eladás / Beszerzés - 2</div><div style="left:26px;top:232px;letter-spacing:0.087px/*f*/">Számlázás / E-mail küldés</div><div style="left:25px;top:256px;letter-spacing:0.077px/*f*/">Hitelesítés / Archiválás</div><div style="left:25px;top:280px;letter-spacing:-0.023px/*f*/">Számla megjegyzések</div><div style="left:25px;top:304px;letter-spacing:0.234px/*f*/">Technikai számla</div><div style="left:25px;top:328px;letter-spacing:0.155px/*f*/">Nyitás / Zárás</div><div style="left:25px;top:352px;letter-spacing:0.007px/*f*/">Ügyfél specifikus beállítások</div><div style="left:14px;top:376px;letter-spacing:0.1px/*f*/">Készlet</div><div style="left:14px;top:400px;letter-spacing:0.329px/*f*/">Járművek</div><div style="left:14px;top:424px;letter-spacing:0.258px/*f*/">Jelentések</div><div style="left:14px;top:448px;letter-spacing:0.132px/*f*/">Feltöltött képek mérete</div><div style="left:14px;top:472px;letter-spacing:0.173px/*f*/">Menedzsment / Kontrolling</div><div style="left:14px;top:496px;letter-spacing:0.12px/*f*/">Munkafolyamat</div><!--CLOUD2--><svg style="left:0;top:588px;width:199px;height:125px" viewBox="0 0 200 130" preserveAspectRatio="none"><defs><filter id="cf2" x="-10%" y="-10%" width="120%" height="120%"><feTurbulence type="fractalNoise" baseFrequency=".07" numOctaves="4" seed="4" result="n"/><feDisplacementMap in="SourceGraphic" in2="n" scale="10" xChannelSelector="R" yChannelSelector="G" result="d"/><feGaussianBlur in="d" stdDeviation="2.200"/></filter></defs><g filter="url(#cf2)"><ellipse cx="70" cy="18" rx="17" ry="14" fill="#5a9acf" opacity="0.95"/><ellipse cx="58" cy="30" rx="26" ry="18" fill="#5a9acf" opacity="0.95"/><ellipse cx="45" cy="45" rx="36" ry="22" fill="#5a9acf" opacity="0.95"/><ellipse cx="72" cy="50" rx="36" ry="28" fill="#5a9acf" opacity="0.95"/><ellipse cx="40" cy="70" rx="44" ry="26" fill="#5a9acf" opacity="0.95"/><ellipse cx="88" cy="75" rx="42" ry="28" fill="#5a9acf" opacity="0.95"/><ellipse cx="20" cy="90" rx="34" ry="24" fill="#5a9acf" opacity="0.95"/><ellipse cx="122" cy="92" rx="36" ry="20" fill="#5a9acf" opacity="0.95"/><ellipse cx="160" cy="98" rx="38" ry="18" fill="#5a9acf" opacity="0.95"/><ellipse cx="192" cy="95" rx="22" ry="22" fill="#5a9acf" opacity="0.95"/><ellipse cx="100" cy="116" rx="112" ry="22" fill="#5a9acf" opacity="0.95"/><ellipse cx="28" cy="58" rx="28" ry="20" fill="#5a9acf" opacity="0.95"/><ellipse cx="98" cy="94" rx="32" ry="12" fill="#3d7cb6" opacity="0.5"/><ellipse cx="72" cy="72" rx="20" ry="10" fill="#3d7cb6" opacity="0.5"/><ellipse cx="122" cy="108" rx="28" ry="8" fill="#3d7cb6" opacity="0.5"/><ellipse cx="60" cy="100" rx="24" ry="8" fill="#3d7cb6" opacity="0.5"/><ellipse cx="85" cy="55" rx="10" ry="14" fill="#3d7cb6" opacity="0.5"/><ellipse cx="55" cy="40" rx="24" ry="14" fill="#a4cdec" opacity="0.5"/><ellipse cx="35" cy="62" rx="26" ry="14" fill="#a4cdec" opacity="0.5"/><ellipse cx="25" cy="88" rx="24" ry="12" fill="#a4cdec" opacity="0.5"/><ellipse cx="70" cy="28" rx="16" ry="12" fill="#a4cdec" opacity="0.5"/><ellipse cx="150" cy="92" rx="30" ry="8" fill="#a4cdec" opacity="0.5"/><ellipse cx="185" cy="90" rx="14" ry="10" fill="#a4cdec" opacity="0.5"/><ellipse cx="70" cy="10" rx="11" ry="8" fill="#e8f4fd" opacity="0.9"/><ellipse cx="60" cy="18" rx="10" ry="8" fill="#e8f4fd" opacity="0.9"/><ellipse cx="82" cy="17" rx="8" ry="7" fill="#e8f4fd" opacity="0.8"/><ellipse cx="48" cy="28" rx="10" ry="8" fill="#e8f4fd" opacity="0.85"/><ellipse cx="30" cy="38" rx="14" ry="9" fill="#e8f4fd" opacity="0.9"/><ellipse cx="18" cy="48" rx="12" ry="9" fill="#e8f4fd" opacity="0.9"/><ellipse cx="40" cy="50" rx="14" ry="8" fill="#e8f4fd" opacity="0.5"/><ellipse cx="12" cy="62" rx="10" ry="8" fill="#e8f4fd" opacity="0.85"/><ellipse cx="26" cy="70" rx="12" ry="7" fill="#e8f4fd" opacity="0.5"/><ellipse cx="8" cy="82" rx="9" ry="8" fill="#e8f4fd" opacity="0.8"/><ellipse cx="30" cy="92" rx="16" ry="7" fill="#e8f4fd" opacity="0.5"/><ellipse cx="118" cy="74" rx="7" ry="5" fill="#e8f4fd" opacity="0.9"/><ellipse cx="130" cy="80" rx="9" ry="6" fill="#e8f4fd" opacity="0.9"/><ellipse cx="147" cy="84" rx="8" ry="6" fill="#e8f4fd" opacity="0.85"/><ellipse cx="163" cy="77" rx="7" ry="9" fill="#e8f4fd" opacity="0.95"/><ellipse cx="170" cy="88" rx="10" ry="7" fill="#e8f4fd" opacity="0.8"/><ellipse cx="193" cy="77" rx="9" ry="10" fill="#e8f4fd" opacity="0.95"/><ellipse cx="184" cy="92" rx="10" ry="7" fill="#e8f4fd" opacity="0.8"/><ellipse cx="197" cy="95" rx="8" ry="10" fill="#e8f4fd" opacity="0.7"/><ellipse cx="60" cy="119" rx="40" ry="7" fill="#e8f4fd" opacity="0.3"/><ellipse cx="150" cy="119" rx="40" ry="7" fill="#e8f4fd" opacity="0.32"/><ellipse cx="100" cy="126" rx="100" ry="7" fill="#e8f4fd" opacity="0.35"/><ellipse cx="70" cy="36" rx="12" ry="8" fill="#e8f4fd" opacity="0.4"/><ellipse cx="160" cy="50" rx="30" ry="7" fill="#7fb6e2" opacity="0.7"/><ellipse cx="168" cy="46" rx="18" ry="5" fill="#a8d0ee" opacity="0.6"/><ellipse cx="140" cy="55" rx="16" ry="4" fill="#6ea8d8" opacity="0.5"/><ellipse cx="145" cy="30" rx="14" ry="8" fill="#164a75" opacity="0.55"/></g></svg><!--/CLOUD2--></div>
<div class="a" style="left:207px;top:38px;font:bold 12px 'Liberation Sans',sans-serif;color:#6b8de6;letter-spacing:-0.142px/*f*/">Pénzügy - Általános beállítások</div>
<div class="a lb" style="left:207px;top:56px;color:#e8432a;letter-spacing:-0.009px/*f*/">Üzleti év kezdete</div>
<div class="a lb" style="left:207px;top:75px;;letter-spacing:-0.009px/*f*/">Hónap</div>
<div class="a lb" style="left:382px;top:75px;;letter-spacing:-0.185px/*f*/">Nap</div>
<div class="a lb" style="left:460px;top:76px;;letter-spacing:0.103px/*f*/">Könyvelés kezdete</div>
<div class="a cmb" style="left:205px;top:95px;width:169px;height:23px"><span style="left:5px;top:3px;letter-spacing:-0.145px/*f*/">Április</span></div>
<div class="a cmb na" style="left:380px;top:95px;width:60px;height:23px;text-align:center;line-height:20px">1</div>
<div class="a cmb na" style="left:458px;top:94px;width:93px;height:23px"></div>
<svg style="left:554px;top:98px" width="16" height="16" viewBox="0 0 16 16"><rect x="1.500" y="2.500" width="12" height="11" fill="#fff" stroke="#8a8a9a"/><rect x="1.500" y="2.500" width="12" height="2.500" fill="#c33"/><text x="3" y="12" font-family="Liberation Sans" font-size="7" font-weight="bold" fill="#d2691e">12</text><path d="M9 9l2 3 4-6" stroke="#2a4fc0" stroke-width="1.600" fill="none"/></svg>
<div class="a lb" style="left:460px;top:119px;font-style:italic;letter-spacing:0.011px/*f*/">Dátum rögzítésekor elfogadott legkorábbi dátum. (Lehet korábbi</div>
<div class="a lb" style="left:460px;top:133px;font-style:italic;letter-spacing:0.033px/*f*/">dátumot is rögzíteni, ebben az esetben figyelmeztet a rendszer.)</div>
<div class="a cb on" style="left:205px;top:129px"></div>
<div class="a lb" style="left:224px;top:128px;;letter-spacing:-0.222px/*f*/">Könyvelési időszakok használata</div>
<div class="a cb on" style="left:205px;top:151px"></div>
<div class="a lb" style="left:224px;top:150px;;letter-spacing:-0.109px/*f*/">ÁFA Könyvelési időszakok használata</div>
<div class="a cb" style="left:205px;top:172px"></div>
<div class="a lb" style="left:224px;top:171px;;letter-spacing:-0.144px/*f*/">Átlag árfolyam használata pénztárnál és banknál</div>
<div class="a cb" style="left:520px;top:172px"></div>
<div class="a lb" style="left:539px;top:171px;;letter-spacing:0.048px/*f*/">Csak utolsó banki tételt lehet törölni / módosítani</div>
<div class="a cb" style="left:205px;top:197px"></div>
<div class="a lb" style="left:224px;top:189px;">Véglegesítés / könyvelés után, új, üres dokumentum automatikus megn</div>
<div class="a lb" style="left:224px;top:203px;;letter-spacing:0.089px/*f*/">esetén). Minden cégre érvényes!</div>
<div class="a lb" style="left:207px;top:223px;;letter-spacing:0.132px/*f*/">Tárgyi eszk. ellenszámla szám</div>
<div class="a cmb" style="left:205px;top:241px;width:340px;height:23px"><b style="letter-spacing:-0.255px/*f*/;letter-spacing:-0.255px/*f*/">1612</b><i></i><span style="letter-spacing:0.033px/*f*/;letter-spacing:0.033px/*f*/">Beruh 2</span></div>
<div class="a" style="left:547px;top:229px;width:33px;height:43px;border:5px solid #22b14c;background:#fff"><div class="a" style="left:2px;top:2px;width:21px;height:30px;border:1px solid #6a3fb0;background:#f6f6f6"><svg style="left:3px;top:5px" width="16" height="18.500" viewBox="0 0 18 21"><defs><linearGradient id="dg27" x1="0" y1="0" x2="1" y2="1"><stop offset="0" stop-color="#fff"/><stop offset="1" stop-color="#d6e4f6"/></linearGradient></defs><path d="M1.500 1.500h9l4 4v13h-13z" fill="url(#dg27)" stroke="#a8b4c8"/><path d="M10.500 1.500v4h4" fill="#eef3fa" stroke="#a8b4c8" stroke-width=".8"/><circle cx="12" cy="15.500" r="4.500" fill="#1f9a3a" stroke="#0f6a22" stroke-width=".6"/><path d="M12 12.800v5.400M9.300 15.500h5.400" stroke="#fff" stroke-width="1.800"/></svg></div></div>
<div class="a lb" style="left:593px;top:223px;">Fejl</div>
<div class="a cmb" style="left:591px;top:241px;width:367px;height:23px"><b>41</b></div>
<div class="a lb" style="left:207px;top:273px;;letter-spacing:0.107px/*f*/">Iparűzési adó főkönyvi száma</div>
<div class="a cmb" style="left:205px;top:291px;width:367px;height:23px"><b style="letter-spacing:-0.255px/*f*/;letter-spacing:-0.255px/*f*/">4692</b><i></i><span style="letter-spacing:0.03px/*f*/;letter-spacing:0.03px/*f*/">Helyi iparűzési adó elszámolási számla</span></div>
<div class="a lb" style="left:593px;top:273px;">Fejl</div>
<div class="a cmb" style="left:591px;top:291px;width:367px;height:23px"><b>14</b></div>
<div class="a lb" style="left:207px;top:323px;;letter-spacing:0.149px/*f*/">Társasági adó főkönyvi száma</div>
<div class="a cmb" style="left:205px;top:341px;width:367px;height:23px"><b style="letter-spacing:-0.255px/*f*/;letter-spacing:-0.255px/*f*/">4611</b><i></i><span style="letter-spacing:0.115px/*f*/;letter-spacing:0.115px/*f*/">Társasági adó elszámolási számla</span></div>
<div class="a lb" style="left:593px;top:323px;">Saja</div>
<div class="a cmb" style="left:591px;top:341px;width:367px;height:23px"><b>58</b></div>
<div class="a lb" style="left:207px;top:374px;;letter-spacing:0.076px/*f*/">Pénzforgalmi ÁFA nyilvántartó számla - vevő</div>
<div class="a cmb" style="left:205px;top:392px;width:367px;height:23px"><b style="letter-spacing:-0.255px/*f*/;letter-spacing:-0.255px/*f*/">3682</b><i></i><span style="letter-spacing:0.02px/*f*/;letter-spacing:0.02px/*f*/">Visszatérítendő adók</span></div>
<div class="a lb" style="left:593px;top:374px;">Lelt</div>
<div class="a cmb" style="left:591px;top:392px;width:367px;height:23px"><i></i></div>
<div class="a lb" style="left:207px;top:424px;;letter-spacing:0.048px/*f*/">Pénzforgalmi ÁFA nyilvántartó számla - szállító</div>
<div class="a cmb" style="left:205px;top:442px;width:367px;height:23px"><b style="letter-spacing:-0.255px/*f*/;letter-spacing:-0.255px/*f*/">3895</b><i></i><span style="letter-spacing:0.12px/*f*/;letter-spacing:0.12px/*f*/">Technikai átvezetési számla</span></div>
<div class="a lb" style="left:593px;top:424px;">Lelt</div>
<div class="a cmb" style="left:591px;top:442px;width:367px;height:23px"><i></i></div>
<div class="a lb" style="left:207px;top:476px;;letter-spacing:0.041px/*f*/">Éven belüli költség megosztás főkönyvi szám</div>
<div class="a cmb" style="left:205px;top:494px;width:367px;height:23px"><b style="letter-spacing:-0.255px/*f*/;letter-spacing:-0.255px/*f*/">3895</b><i></i><span style="letter-spacing:0.12px/*f*/;letter-spacing:0.12px/*f*/">Technikai átvezetési számla</span></div>
<div class="a cb on" style="left:205px;top:528px"></div>
<div class="a lb" style="left:224px;top:527px;;letter-spacing:-0.035px/*f*/">Túlfizetés a partner főkönyvi számra könyvelődik</div>
<div class="a cb" style="left:591px;top:528px"></div>
<div class="a lb" style="left:610px;top:527px;">L</div>
<div class="a cb" style="left:205px;top:558px"></div>
<div class="a lb" style="left:224px;top:557px;;letter-spacing:-0.115px/*f*/">Költséghely megadása a számla fejlécébe</div>
<div class="a cb" style="left:591px;top:558px"></div>
<div class="a lb" style="left:610px;top:557px;">M</div>
<div class="a cb" style="left:205px;top:588px"></div>
<div class="a lb" style="left:224px;top:587px;;letter-spacing:-0.197px/*f*/">Munkaszám megadása a számla fejlécébe</div>
<div class="a cb on" style="left:205px;top:618px"></div>
<div class="a lb" style="left:224px;top:617px;;letter-spacing:-0.1px/*f*/">Munkaszám és költséghely a kiegyenlítésekben</div>
<div class="a cb on" style="left:591px;top:618px"></div>
<div class="a lb" style="left:610px;top:617px;">A</div>
<div class="a lb" style="left:207px;top:640px;;letter-spacing:0.035px/*f*/">Kiegyenlítés korábbi mint a számla sz.v telj dátuma - átvezetési</div>
<div class="a lb" style="left:207px;top:654px;;letter-spacing:0.158px/*f*/">főkönyvi szám - Vevő</div>
<div class="a lb" style="left:593px;top:640px;;letter-spacing:0.035px/*f*/">Kiegyenlítés korábbi mint a számla sz.v telj dátuma - átvezetési</div>
<div class="a lb" style="left:593px;top:654px;;letter-spacing:0.095px/*f*/">főkönyvi szám - Szállító</div>
<div class="a cmb" style="left:205px;top:679px;width:366px;height:23px"><b style="letter-spacing:-0.255px/*f*/;letter-spacing:-0.255px/*f*/">3892</b><i></i><span style="letter-spacing:0.003px/*f*/;letter-spacing:0.003px/*f*/">Bankszámlák közötti átvezetési számla</span></div>
<div class="a cmb" style="left:591px;top:678px;width:367px;height:23px"><b style="letter-spacing:-0.255px/*f*/;letter-spacing:-0.255px/*f*/">3892</b><i></i><span style="letter-spacing:0.003px/*f*/;letter-spacing:0.003px/*f*/">Bankszámlák közötti átvezetési számla</span></div>
<svg style="left:974px;top:683px" width="16" height="18" viewBox="0 0 18 21"><defs><linearGradient id="dg974684" x1="0" y1="0" x2="1" y2="1"><stop offset="0" stop-color="#fff"/><stop offset="1" stop-color="#d6e4f6"/></linearGradient></defs><path d="M1.500 1.500h9l4 4v13h-13z" fill="url(#dg974684)" stroke="#a8b4c8"/><path d="M10.500 1.500v4h4" fill="#eef3fa" stroke="#a8b4c8" stroke-width=".8"/><circle cx="12" cy="15.500" r="4.500" fill="#1f9a3a" stroke="#0f6a22" stroke-width=".6"/><path d="M12 12.800v5.400M9.300 15.500h5.400" stroke="#fff" stroke-width="1.800"/></svg>
<div class="a bar" style="left:0;top:743px;width:1007px;height:36px"><div class="a btn" style="left:12px;top:6px;width:22px;height:24px"><svg style="left:4px;top:3px" width="12" height="15" viewBox="0 0 12 15"><rect x="0.500" y="0.500" width="11" height="14" fill="#aed4f4" stroke="#7aaede"/><rect x="1.500" y="1.500" width="9" height="1.500" fill="#f2b84a"/><rect x="2" y="4" width="5" height="3" fill="#e8f2fc"/><rect x="7.500" y="4" width="2.500" height="3" fill="#f6d49a"/><path d="M2 9h4M2 11h4M2 13h4" stroke="#e8f2fc" stroke-width="1.200"/><rect x="7.500" y="8.500" width="2.500" height="5" fill="#f2a83a"/></svg></div><div class="a btn" style="left:811px;top:5px;width:85px"><svg style="left:12px;top:4px" width="16" height="13" viewBox="0 0 16 13"><path d="M1.500 7.500l2-2L6 8l6.500-7L15 3 6.200 12.300z" fill="#3db53a" stroke="#1f7a20" stroke-width=".7" stroke-linejoin="round"/><path d="M3.500 6.500L6 9l6.500-7" stroke="#8ee07a" stroke-width="1" fill="none"/></svg><span style="left:32px;letter-spacing:-0.189px/*f*/">OK</span></div><div class="a btn" style="left:904px;top:5px;width:99px"><svg style="left:10px;top:3px" width="15" height="16" viewBox="0 0 15 16"><path d="M2 1.500l2.500-1L7.500 5l3-4.500 3 1.500L10 8l4 5.500-2.500 2L7.500 11 4 15.500 1 14l4-6z" fill="#f04a28" stroke="#b82a10" stroke-width=".7" stroke-linejoin="round"/></svg><span style="left:30px;letter-spacing:-0.219px/*f*/">Mégse</span></div></div></div>
<div class="a" id="dlg2"><div class="a wr"><div class="a dt"><div class="a ima" style="left:7px;top:6px"><b>ıma</b></div><div class="a ttl" style="letter-spacing:-0.369px/*f*/;letter-spacing:-0.369px/*f*/">Tárgyi eszk. ellenszámla szám</div><svg style="left:541px;top:0" width="30" height="30" viewBox="0 0 30 30" fill="none"><path d="M10.500 9.500l10 10M20.500 9.500l-10 10" stroke="#777"/></svg></div>
<div class="a" id="d2tool"><svg style="left:9px;top:6px" width="18" height="21" viewBox="0 0 18 21"><defs><linearGradient id="dg96" x1="0" y1="0" x2="1" y2="1"><stop offset="0" stop-color="#fff"/><stop offset="1" stop-color="#d6e4f6"/></linearGradient></defs><path d="M1.500 1.500h9l4 4v13h-13z" fill="url(#dg96)" stroke="#a8b4c8"/><path d="M10.500 1.500v4h4" fill="#eef3fa" stroke="#a8b4c8" stroke-width=".8"/><circle cx="12" cy="15.500" r="4.500" fill="#1f9a3a" stroke="#0f6a22" stroke-width=".6"/><path d="M12 12.800v5.400M9.300 15.500h5.400" stroke="#fff" stroke-width="1.800"/></svg><span style="left:31px;letter-spacing:0.047px/*f*/">Új</span><svg style="left:71px;top:8px" width="20" height="15" viewBox="0 0 20 15"><path d="M0.500 13.500l3-4L16 1.500l2 3L5 12z" fill="#f0ae34"/><path d="M3.500 9.500L16 1.500l.9 1.300L4.300 10.800z" fill="#fbd76c"/><path d="M16 1.500l1.600-.9c.9-.4 2.200 1.400 1.600 2.200L18 4.500z" fill="#e77c7c"/><path d="M0.500 13.500l3-4L5 12z" fill="#ead2a4"/><path d="M0.500 13.500l1.200-1.600.6 1z" fill="#444"/><path d="M0 14.500h8" stroke="#c4c4c4" stroke-width=".8"/></svg><span style="left:93px;letter-spacing:-0.202px/*f*/">Karton</span><svg style="left:157px;top:7px" width="18" height="21" viewBox="0 0 18 21"><defs><linearGradient id="dg1577" x1="0" y1="0" x2="1" y2="1"><stop offset="0" stop-color="#fff"/><stop offset="1" stop-color="#d6e4f6"/></linearGradient></defs><path d="M1.500 1.500h9l4 4v13h-13z" fill="url(#dg1577)" stroke="#a8b4c8"/><path d="M10.500 1.500v4h4" fill="#eef3fa" stroke="#a8b4c8" stroke-width=".8"/><circle cx="12.500" cy="15.500" r="4.500" fill="#d8323a" stroke="#9a1a20" stroke-width=".6"/><path d="M10.600 13.600l3.800 3.800M14.400 13.600l-3.800 3.800" stroke="#fff" stroke-width="1.700"/></svg><span style="left:179px;letter-spacing:-0.357px/*f*/">Törlés</span><svg style="left:239px;top:7px" width="18" height="18" viewBox="0 0 18 18"><path d="M2 8c.5-4 4-6 8-5l.5-2.500 5 4.500-6 2.500.5-2C7 5 5 6.500 5 9z" fill="#3cb83c" stroke="#1f8a22" stroke-width=".6"/><path d="M16 10c-.5 4-4 6-8 5l-.5 2.500-5-4.500 6-2.500-.5 2c3 .5 5-1 5-3.500z" fill="#3cb83c" stroke="#1f8a22" stroke-width=".6"/></svg><span style="left:260px;letter-spacing:-0.238px/*f*/">Aktualizálás</span></div>
<div class="a" id="grid"><div class="a gw"><div class="a" id="ghead"><div class="a" style="left:50px;top:0;width:1px;height:36px;background:#d0d0d0"></div><div class="a" style="left:470px;top:0;width:1px;height:36px;background:#d0d0d0"></div>
<svg style="left:4px;top:13px" width="11" height="10" viewBox="0 0 11 10"><rect x="0.500" y="0.500" width="10" height="9" fill="#f6f08a" stroke="#b4b078"/><rect x="1" y="3.800" width="9" height="2.400" fill="#5a82f0"/><path d="M2.500 2.500h6M2.500 7.500h6" stroke="#111" stroke-width="1.200"/></svg>
<div class="a gh" style="left:53px;top:10px;letter-spacing:-0.055px/*f*/">Tárgyi eszköz típus</div><div class="a" style="left:453px;top:2px;font-size:8px">1</div><svg style="left:458px;top:15px" width="8" height="4" viewBox="0 0 8 4"><path d="M0 4L4 0l4 4z" fill="#1f7ad6"/></svg>
<div class="a gh" style="left:473px;top:4px;line-height:14px;white-space:normal;width:80px">Főkönyvi számlaszám</div><div class="a" style="left:559px;top:12px;width:8px;height:8px;border:1px solid #5b8fe0"></div></div>
<div class="a gr sel" style="top:36px"><u></u><svg style="left:2px;top:5px" width="4" height="7" viewBox="0 0 4 7"><path d="M0 0l3.500 3.500L0 7z" fill="#3b7fd4"/></svg><s style="letter-spacing:-0.372px/*f*/;letter-spacing:-0.373px/*f*/">Immateriális</s><em>114</em></div><div class="a gr alt" style="top:53px"><u></u><s style="letter-spacing:-0.31px/*f*/;letter-spacing:-0.31px/*f*/">Immateriális kis értékű</s><em>168</em></div><div class="a gr" style="top:70px"><u></u><s style="letter-spacing:-0.249px/*f*/;letter-spacing:-0.249px/*f*/">Kisértékű</s><em>1611</em></div><div class="a gr alt" style="top:87px"><u></u><s style="letter-spacing:-0.249px/*f*/;letter-spacing:-0.249px/*f*/">Kisértékű</s><em>1612</em></div><div class="a gr" style="top:104px"><u></u><s style="letter-spacing:0.005px/*f*/;letter-spacing:0.006px/*f*/">Tárgyi eszköz</s><em>1611</em></div><div class="a gr alt" style="top:121px"><u></u><s style="letter-spacing:0.005px/*f*/;letter-spacing:0.006px/*f*/">Tárgyi eszköz</s><em>1612</em></div></div></div></div></div>
<div class="a" id="dlg3"><div class="a wr"><div class="a dt"><div class="a ima" style="left:7px;top:6px"><b>ıma</b></div><div class="a ttl" style="letter-spacing:-0.369px/*f*/;letter-spacing:-0.369px/*f*/">Tárgyi eszk. ellenszámla szám</div><svg style="left:451px;top:0" width="30" height="30" viewBox="0 0 30 30" fill="none"><path d="M10.500 9.500l10 10M20.500 9.500l-10 10" stroke="#000" stroke-width="1.200"/></svg></div>
<div class="a lb" style="left:17px;top:41px;letter-spacing:0.151px/*f*/">Tárgyi eszköz típus</div>
<div class="a cmb na" style="left:265px;top:137px;width:169px;height:24px"></div><svg style="left:420px;top:146px" width="9" height="6" viewBox="0 0 9 6" fill="none"><path d="M0.500 0.500l4 4 4-4" stroke="#444"/></svg>
<div class="a" style="left:15px;top:66px;width:251px;height:23px;border:1px solid #0078d7;background:#fff"><div class="a" style="left:4px;top:3px;font-size:12.500px;letter-spacing:-0.008px/*f*/">Tárgyi eszköz</div><div class="a" style="right:0;top:0;width:17px;height:21px;background:#cce4f7;border-left:1px solid #0078d7"></div><svg style="left:237px;top:8px" width="9" height="6" viewBox="0 0 9 6" fill="none"><path d="M0.500 0.500l4 4 4-4" stroke="#333"/></svg></div>
<div class="a" id="dd"><div style="top:0;background:#0078d7;color:#fff;letter-spacing:0.015px/*f*/">Tárgyi eszköz</div><div style="top:17px;letter-spacing:-0.242px/*f*/">Kisértékű</div><div style="top:34px;letter-spacing:-0.159px/*f*/">Immateriális</div><div style="top:51px;letter-spacing:-0.115px/*f*/">Immateriális kis értékű</div></div>
<div class="a bar" style="left:0;top:183px;width:481px;height:36px"><div class="a btn" style="left:12px;top:6px;width:22px;height:24px"><svg style="left:4px;top:3px" width="12" height="15" viewBox="0 0 12 15"><rect x="0.500" y="0.500" width="11" height="14" fill="#aed4f4" stroke="#7aaede"/><rect x="1.500" y="1.500" width="9" height="1.500" fill="#f2b84a"/><rect x="2" y="4" width="5" height="3" fill="#e8f2fc"/><rect x="7.500" y="4" width="2.500" height="3" fill="#f6d49a"/><path d="M2 9h4M2 11h4M2 13h4" stroke="#e8f2fc" stroke-width="1.200"/><rect x="7.500" y="8.500" width="2.500" height="5" fill="#f2a83a"/></svg></div><div class="a btn" style="left:285px;top:6px;width:85px;height:24px;border:2px solid #0a74da"><svg style="left:11px;top:3px" width="16" height="13" viewBox="0 0 16 13"><path d="M1.500 7.500l2-2L6 8l6.500-7L15 3 6.200 12.300z" fill="#3db53a" stroke="#1f7a20" stroke-width=".7" stroke-linejoin="round"/><path d="M3.500 6.500L6 9l6.500-7" stroke="#8ee07a" stroke-width="1" fill="none"/></svg><span style="left:31px;top:3px;letter-spacing:-0.189px/*f*/">OK</span></div><div class="a btn" style="left:378px;top:6px;width:99px"><svg style="left:10px;top:3px" width="15" height="16" viewBox="0 0 15 16"><path d="M2 1.500l2.500-1L7.500 5l3-4.500 3 1.500L10 8l4 5.500-2.500 2L7.500 11 4 15.500 1 14l4-6z" fill="#f04a28" stroke="#b82a10" stroke-width=".7" stroke-linejoin="round"/></svg><span style="left:30px;letter-spacing:-0.219px/*f*/">Mégse</span></div></div>
</div></div>
<div class="a" id="status"><div style="left:9px;color:#8a8a8a;letter-spacing:-0.395px/*f*/">Felhasználó:</div><div style="left:90px;color:#b01818;letter-spacing:-0.215px/*f*/">Edina Kicsindy</div><i style="left:175px"></i><div style="left:182px;color:#8a8a8a;letter-spacing:-0.268px/*f*/">Választott cég:</div><div style="left:264px;color:#b01818;letter-spacing:-0.259px/*f*/">Edina cég név</div><i style="left:341px"></i><div style="left:346px;color:#3f77b5;letter-spacing:-.28px">db02.imaerp.com(40017)-&gt;ima3_support_636785792454648739</div><i style="left:678px"></i>
<div style="left:1608px;color:#8a8a8a;letter-spacing:-0.623px/*f*/">2025.07.02. 14:43:25</div>
<div style="left:1714px;top:3px;width:92px;height:19px;background:#ffe01a;border:1px solid #d9b800"></div><svg style="left:1717px;top:4px" width="13" height="13" viewBox="0 0 13 13"><circle cx="6.500" cy="6.500" r="6" fill="#4cb84c" stroke="#2a8a2a"/><circle cx="6.500" cy="5" r="4" fill="#a8e0a0" opacity=".6"/><path d="M6.500 3.200v6.600M3.200 6.500h6.600" stroke="#fff" stroke-width="2"/></svg><div style="left:1733px;color:#8a7a2a;letter-spacing:-0.206px/*f*/">Idő rögzítése</div>
<div style="left:1808px;top:3px;width:98px;height:19px;background:#0000f0;border:1px solid #6a6ad8;box-shadow:inset 0 0 0 1px #0000c0"></div><svg style="left:1810px;top:4px" width="15" height="15" viewBox="0 0 15 15"><circle cx="7.500" cy="7.500" r="7" fill="#d8d8d8" stroke="#555"/><path d="M2 8c1-3 3-4 5.500-4S12 5 13 8c-2-1.500-3.500-2-5.500-2S4 6.500 2 8z" fill="#222"/><circle cx="7.500" cy="10" r="3" fill="#f4f4f4"/></svg><div style="left:1827px;color:#fff;letter-spacing:-0.311px/*f*/">Dátum szűrés</div></div>
<div class="a" id="task"><svg style="left:16px;top:12px" width="16" height="16" viewBox="0 0 16 16" fill="#fff"><path d="M0 2.300l6.500-.9v6.100H0zM7.300 1.300L16 0v7.500H7.300zM0 8.300h6.500v6.200L0 13.600zM7.300 8.300H16V16l-8.700-1.200z"/></svg>
<div class="a" id="search"><svg style="left:11px;top:11px" width="17" height="17" viewBox="0 0 17 17" fill="none" stroke="#222" stroke-width="1.400"><circle cx="10.500" cy="6.500" r="5"/><path d="M7 10.500L1 16.500"/></svg><span style="letter-spacing:-0.23px/*f*/;letter-spacing:-0.23px/*f*/">Írjon ide a kereséshez</span></div>
<!--TASKICONS--><svg style="left:351px;top:12px" width="18" height="16" viewBox="0 0 18 16" fill="none" stroke="#fff" stroke-width="1.300"><rect x="3.600" y="3.600" width="8.800" height="8.800"/><path d="M0.600 2.500v-2h11v1.500M0.600 13.500v2h11v-1.500M15.500 0.500v4M15.500 6v9.500" /></svg>
<div class="tk" style="left:385px"><svg class="tki" viewBox="0 0 24 24"><path d="M3 3l13-1 3 20-15 1z" fill="#e9efe0" stroke="#9aa890" stroke-width=".6"/><path d="M5 7h11M5 9.500h11" stroke="#b8c4b0" stroke-width=".7"/><ellipse cx="10" cy="14" rx="6" ry="4.500" fill="#6ab82a"/><circle cx="7.500" cy="11.500" r="2.300" fill="#9ad84a" stroke="#3a7a10" stroke-width=".6"/><circle cx="7.500" cy="11.500" r=".8" fill="#111"/><path d="M5 18c3 2 8 2 11-1" stroke="#2a6a10" stroke-width="1.200" fill="none"/><path d="M21 1.500l1.500 1L15 17l-2 1.500.5-2.500z" fill="#e8b830" stroke="#8a5a10" stroke-width=".5"/></svg></div>
<div class="tk run" style="left:435px"><svg class="tki" viewBox="0 0 24 24"><path d="M1 4.500c0-.8.500-1.500 1.500-1.500h6l2 2.500H22c.8 0 1 .5 1 1V9H1z" fill="#e5a52a"/><rect x="1" y="6.500" width="22" height="14" rx="1" fill="#fbd15a"/><path d="M1 12h22v7.500c0 .6-.4 1-1 1H2c-.6 0-1-.4-1-1z" fill="#f6bf3c"/><path d="M6 20.500v-5.500c0-.6.4-1 1-1h10c.6 0 1 .4 1 1v5.500h-3.500v-3h-5v3z" fill="#3a8ee6"/></svg></div>
<div class="tk run" style="left:484px"><svg class="tki" viewBox="0 0 24 24"><path d="M9 3l12 1-3 18-4 .5z" fill="#c8a868"/><path d="M8 2.500l11 1.500-5 18.500L1.500 18z" fill="#dff0f8" stroke="#9ab8c8" stroke-width=".5"/><path d="M8 2.500l11 1.500-1 3.500L6.500 5.500z" fill="#f8fcff"/><path d="M4 12l11 4" stroke="#fff" stroke-width="2" opacity=".6"/></svg></div>
<div class="tk" style="left:534px"><svg class="tki" viewBox="0 0 24 24"><defs><linearGradient id="ge" x1="0" y1="1" x2="1" y2="0"><stop offset="0" stop-color="#0c59a4"/><stop offset=".5" stop-color="#1b9de2"/><stop offset="1" stop-color="#5ed06a"/></linearGradient></defs><circle cx="12" cy="12" r="11" fill="url(#ge)"/><path d="M23 11c0-2-1-4.500-3-6-3.500-2.800-9-2-11.500 1C11 5 15 6 15.500 9c.2 1-.3 2-.8 2.500H23z" fill="#47c8a0" opacity=".85"/><path d="M8 13.500c0-3 2.500-5 5.500-5-4-2-9.500.5-9.500 6 0 4.500 4 8 9 8.200 2.500 0 5-1 6.500-2.700-4.500 2-11.500 0-11.500-6.500z" fill="#1258a8"/><path d="M9.500 12c-.5 3 1.500 6 5 6.500 2.500.3 5-.5 6.500-2.500-1.500.8-3.500 1-5 .2-2-1-2.500-3-1.500-4.200z" fill="#1d1d1d"/></svg></div>
<div class="tk run" style="left:582px"><svg class="tki" viewBox="0 0 24 24"><rect x="3.500" y="0.500" width="17" height="23" rx="1.500" fill="#7e8590"/><rect x="5.500" y="2.500" width="13" height="4.500" fill="#4cc2f0"/><g fill="#d4d8de"><rect x="5.500" y="9" width="3.500" height="3.500"/><rect x="10.200" y="9" width="3.500" height="3.500"/><rect x="15" y="9" width="3.500" height="3.500"/><rect x="5.500" y="13.700" width="3.500" height="3.500"/><rect x="10.200" y="13.700" width="3.500" height="3.500"/><rect x="5.500" y="18.400" width="3.500" height="3.500"/><rect x="10.200" y="18.400" width="3.500" height="3.500"/></g><rect x="15" y="13.700" width="3.500" height="8.200" fill="#1a4f96"/></svg><i style="position:absolute;right:0;bottom:0;width:4px;height:2px;background:#4e7a9c"></i></div>
<div class="tk run" style="left:631px"><svg class="tki" viewBox="0 0 24 24"><defs><linearGradient id="gi" x1="0" y1="0" x2="0" y2="1"><stop offset="0" stop-color="#2690e0"/><stop offset=".5" stop-color="#1478c8"/><stop offset="1" stop-color="#0e68b4"/></linearGradient></defs><rect x="0" y="1" width="24" height="22" rx="3" fill="url(#gi)"/><text x="12" y="16" text-anchor="middle" font-family="Liberation Sans,sans-serif" font-size="11" fill="#fff" letter-spacing="-.5">ıma</text></svg></div>
<div class="tk run" style="left:680px"><svg class="tki" viewBox="0 0 24 24"><circle cx="11" cy="11" r="10" fill="#e8453c"/><path d="M11 11L2.300 6A10 10 0 0 0 11 21l5-8.500z" fill="#34a853"/><path d="M11 11l5 1.500L11 21A10 10 0 0 0 19.700 6H11z" fill="#fbbc05"/><circle cx="11" cy="11" r="4.600" fill="#fff"/><circle cx="11" cy="11" r="3.700" fill="#4285f4"/><circle cx="17.500" cy="17.500" r="6" fill="#1a8ad8"/><text x="17.500" y="20.600" text-anchor="middle" font-family="Liberation Sans,sans-serif" font-size="8.500" fill="#fff">E</text></svg></div>
<div class="tk run" style="left:729px"><svg class="tki" viewBox="0 0 24 24"><rect x="7" y="1.500" width="16" height="21" rx="1.500" fill="#2b7cd3"/><rect x="7" y="1.500" width="16" height="5.500" fill="#41a5ee"/><rect x="7" y="12" width="16" height="5.200" fill="#185abd"/><rect x="7" y="17.200" width="16" height="5.300" rx="1" fill="#103f91"/><rect x="0" y="5.500" width="13" height="13" rx="1.200" fill="#185abd"/><text x="6.500" y="15.500" text-anchor="middle" font-family="Liberation Sans,sans-serif" font-weight="bold" font-size="9.500" fill="#fff">W</text></svg><i style="position:absolute;right:0;bottom:0;width:4px;height:2px;background:#4e7a9c"></i></div>
<div class="tk run" style="left:778px"><svg class="tki" viewBox="0 0 24 24"><circle cx="11" cy="11" r="10" fill="#e8453c"/><path d="M11 11L2.300 6A10 10 0 0 0 11 21l5-8.500z" fill="#34a853"/><path d="M11 11l5 1.500L11 21A10 10 0 0 0 19.700 6H11z" fill="#fbbc05"/><circle cx="11" cy="11" r="4.600" fill="#fff"/><circle cx="11" cy="11" r="3.700" fill="#4285f4"/><circle cx="17.500" cy="17.500" r="6" fill="#e8357a"/><text x="17.500" y="20.600" text-anchor="middle" font-family="Liberation Sans,sans-serif" font-size="8.500" fill="#fff">E</text></svg></div>
<div class="tk run" style="left:827px"><svg class="tki" viewBox="0 0 24 24"><path d="M11 4C5 4 1 8.500 1 13.500 1 18 4.500 21 9 21c2 0 2.500-1.200 2-2.500-.5-1.500.5-2.500 2-2.500h3.500c3 0 5-2 5-5C21.500 7 17 4 11 4z" fill="#a8c8e8" stroke="#5a7a9a" stroke-width=".6"/><circle cx="6" cy="10" r="1.700" fill="#e83a3a"/><circle cx="10.500" cy="7.500" r="1.700" fill="#f0d020"/><circle cx="5" cy="15" r="1.700" fill="#3ab83a"/><circle cx="15" cy="8" r="1.600" fill="#3a6ae8"/><path d="M22.500 0.500l1 1L13 19l-2 1 .5-2.500z" fill="#e8922a" stroke="#8a4a10" stroke-width=".5"/><path d="M20 2l3-2 1 1-2 3z" fill="#c8d0d8"/></svg></div>
<div class="tk run" style="left:876px"><svg class="tki" viewBox="0 0 24 24"><circle cx="12" cy="12" r="11.500" fill="#fff"/><g stroke-width="2.600" stroke-linecap="round" fill="none"><path d="M10 5.500v5" stroke="#36c5f0"/><path d="M5.500 10H8" stroke="#36c5f0"/><path d="M18.500 10h-5" stroke="#2eb67d"/><path d="M14 5.500V8" stroke="#2eb67d"/><path d="M14 18.500v-5" stroke="#ecb22e"/><path d="M18.500 14H16" stroke="#ecb22e"/><path d="M5.500 14h5" stroke="#e01e5a"/><path d="M10 18.500V16" stroke="#e01e5a"/></g></svg></div>
<div class="tk run" style="left:925px"><svg class="tki" viewBox="0 0 24 24"><rect x="0" y="0" width="24" height="24" rx="3" fill="#0a0a6e"/><circle cx="12" cy="12" r="9" fill="#fff"/><path d="M3.500 12l5-3.500v2.300h7V8.500l5 3.500-5 3.500v-2.300h-7v2.300z" fill="#0a0a6e"/></svg></div>
<div class="tk run" style="left:974px"><svg class="tki" viewBox="0 0 24 24"><rect x="7" y="1.500" width="16" height="21" rx="1.500" fill="#21a366"/><rect x="15" y="1.500" width="8" height="7" fill="#33c481"/><rect x="7" y="8.500" width="8" height="7" fill="#107c41"/><rect x="15" y="8.500" width="8" height="7" fill="#21a366"/><rect x="7" y="15.500" width="16" height="7" rx="1" fill="#185c37"/><rect x="0" y="5.500" width="13" height="13" rx="1.200" fill="#107c41"/><text x="6.500" y="15.500" text-anchor="middle" font-family="Liberation Sans,sans-serif" font-weight="bold" font-size="9.500" fill="#fff">X</text></svg><i style="position:absolute;right:0;bottom:0;width:4px;height:2px;background:#4e7a9c"></i></div>
<div class="tk run" style="left:1023px"><svg class="tki" viewBox="0 0 24 24"><defs><linearGradient id="gh" x1="0" y1="0" x2="0" y2="1"><stop offset="0" stop-color="#9ad84a"/><stop offset="1" stop-color="#2a8a1a"/></linearGradient></defs><circle cx="12" cy="12" r="11.500" fill="url(#gh)"/><path d="M1 9h22v8H1z" fill="#fff" opacity=".92"/><circle cx="12" cy="12" r="11.500" fill="none" stroke="#3a8a20" stroke-width="1"/><text x="12" y="17" text-anchor="middle" font-family="Liberation Sans,sans-serif" font-weight="bold" font-size="12" fill="#111" letter-spacing="-.8">HS</text></svg></div>
<div class="tk run" style="left:1072px"><svg class="tki" viewBox="0 0 24 24"><path d="M12 1C5.500 1 2 4 2 10.500c0 4 1.500 6.500 4 8V23l4-3.500h2c6.500 0 10-3 10-9S18.500 1 12 1z" fill="#fff" stroke="#7d5fe0" stroke-width="2"/><path d="M8 6c-1 .5-1.500 1.500-1 3 1 3 4 6 7.500 7.500 1 .3 2-.5 2.500-1.500l-2.500-2-1.300 1c-2-1-3.200-2.200-4-4l1-1.300z" fill="#7d5fe0"/><path d="M12.500 5c3 .2 5 2.200 5 5.500M12.800 7.200c1.700.2 2.700 1.300 2.800 3" stroke="#7d5fe0" stroke-width="1" fill="none" stroke-linecap="round"/></svg></div>
<div class="tk run" style="left:1121px"><svg class="tki" viewBox="0 0 24 24"><ellipse cx="11" cy="8" rx="10" ry="6" fill="#f4f4f4" stroke="#e03030" stroke-width="1.500" transform="rotate(-18 11 8)"/><path d="M10 3l4.500 14M19 4L9.500 16" stroke="#c8ccd4" stroke-width="1.600"/><circle cx="9" cy="18.500" r="2.600" fill="none" stroke="#2a8ae0" stroke-width="1.800"/><circle cx="16" cy="19.500" r="2.600" fill="none" stroke="#2a8ae0" stroke-width="1.800"/></svg></div>
<div class="tk run act" style="left:1171px"><svg class="tki" viewBox="0 0 24 24"><defs><linearGradient id="gi2" x1="0" y1="0" x2="0" y2="1"><stop offset="0" stop-color="#2690e0"/><stop offset=".5" stop-color="#1478c8"/><stop offset="1" stop-color="#0e68b4"/></linearGradient></defs><rect x="0" y="1" width="24" height="22" rx="3" fill="url(#gi2)"/><text x="12" y="16" text-anchor="middle" font-family="Liberation Sans,sans-serif" font-size="11" fill="#fff" letter-spacing="-.5">ıma</text></svg><i style="position:absolute;left:44px;top:0;width:4px;height:40px;background:#2a2a2a"></i></div>
<svg style="left:1731px;top:13px" width="14" height="9" viewBox="0 0 14 9" fill="none" stroke="#fff" stroke-width="1.300"><path d="M1 8l6-6.500L13 8"/></svg>
<svg style="left:1754px;top:11px" width="18" height="14" viewBox="0 0 18 14" fill="none" stroke="#fff" stroke-width="1.200"><rect x="5.500" y="4.500" width="11" height="7" fill="#fff" fill-opacity=".9"/><path d="M4.500 6.500v3"/><path d="M1.500 1v2.500M4 1v2.500M.5 3.500h4.500v1.500c0 1-1 2-2.200 2S.5 6 .5 5zM2.700 7v3.500h2"/></svg>
<svg style="left:1779px;top:10px" width="18" height="17" viewBox="0 0 18 17" fill="none" stroke="#cfcfcf" stroke-width="1.200"><path d="M2 14C2 7 7 2 14 2" opacity=".75"/><path d="M5.500 14.500c0-5 3.500-8.500 8.500-8.500" opacity=".85"/><path d="M9 15c0-3 2-5 5-5"/><circle cx="14.500" cy="14.500" r="1.700" fill="#fff" stroke="none"/></svg>
<div class="a" style="left:1797px;top:3px;width:71px;text-align:center;font-family:'Liberation Sans',sans-serif;font-size:12px;color:#fff;letter-spacing:-.45px;line-height:17px">14:43<br>2025.07.02.</div>
<svg style="left:1878px;top:11px" width="18" height="18" viewBox="0 0 18 18" fill="none" stroke="#fff" stroke-width="1.200"><path d="M1.500 1.500h15v11h-5.500l-3 3.500v-3.500h-6.500z"/></svg>
<div class="a" style="left:1914px;top:0;width:1px;height:40px;background:#555"></div><!--/TASKICONS-->
</div>
</body></html>
